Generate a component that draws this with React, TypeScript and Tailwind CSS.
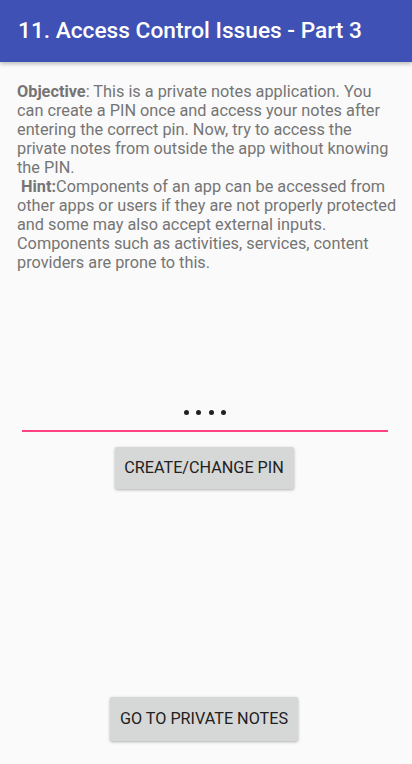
export default function App() {
  return (
    <div className="flex h-[764px] w-[412px] flex-col bg-[#fafafa] font-['Roboto',sans-serif]">
      <header className="flex h-[62px] shrink-0 items-center bg-[#3f51b5] pl-[18px] shadow-[0_2px_4px_rgba(0,0,0,0.25)]">
        <h1 className="text-[22.7px] font-medium text-white">11. Access Control Issues - Part 3</h1>
      </header>

      <p className="pl-[17px] pr-[12px] pt-[20px] text-[16.3px] leading-[19px] text-[#757575]">
        <b className="font-bold">Objective</b>: This is a private notes application. You can create a PIN once and
        access your notes after entering the correct pin. Now, try to access the private notes from outside the app
        without knowing the PIN.
        <br />
        <b className="font-bold"> &nbsp;Hint:</b>Components of an app can be accessed from other apps or users if they
        are not properly protected and some may also accept external inputs. Components such as activities, services,
        content providers are prone to this.
      </p>

      <div className="ml-[22px] mr-[24px] mt-[122px] flex h-[38px] items-center justify-center border-b-2 border-[#ff4081]">
        <div className="flex gap-[7.5px]">
          <span className="h-[5px] w-[5px] rounded-full bg-[#212121]" />
          <span className="h-[5px] w-[5px] rounded-full bg-[#212121]" />
          <span className="h-[5px] w-[5px] rounded-full bg-[#212121]" />
          <span className="h-[5px] w-[5px] rounded-full bg-[#212121]" />
        </div>
      </div>

      <div className="mt-[15px] flex justify-center pr-[4px]">
        <button className="h-[42px] w-[179px] rounded-[2px] bg-[#d6d7d7] text-[16.2px] text-[#212121] shadow-[0_1px_3px_rgba(0,0,0,0.3)]">
          CREATE/CHANGE PIN
        </button>
      </div>

      <div className="flex-1" />

      <div className="mb-[23px] flex justify-center pr-[4px]">
        <button className="h-[44px] w-[188px] rounded-[2px] bg-[#d6d7d7] text-[16.2px] text-[#212121] shadow-[0_1px_3px_rgba(0,0,0,0.3)]">
          GO TO PRIVATE NOTES
        </button>
      </div>
    </div>
  );
}
